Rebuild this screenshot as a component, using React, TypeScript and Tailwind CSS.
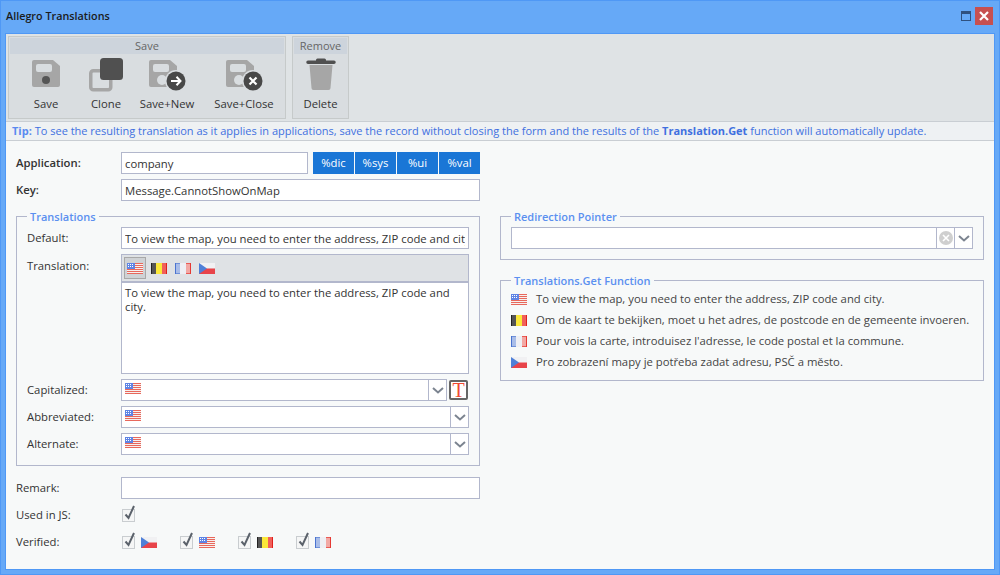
import React from 'react';

const font = { fontFamily: '"Open Sans", "Noto Sans", sans-serif' };

const FlagUS = () => (
    <svg width="16" height="11" viewBox="0 0 16 11" shapeRendering="crispEdges" className="shrink-0">
        <rect width="16" height="11" fill="#f6f0ee" />
        {[0, 2, 4, 6, 8, 10].map((y) => (
            <rect key={y} y={y} width="16" height="1" fill="#e8685c" />
        ))}
        <rect width="8" height="6" fill="#5f84e4" />
        {[1, 3, 5].map((x) => [1, 3].map((y) => <rect key={`${x}-${y}`} x={x} y={y} width="1" height="1" fill="#fff" />))}
    </svg>
);

const FlagBE = () => (
    <svg width="16" height="11" viewBox="0 0 16 11" shapeRendering="crispEdges" className="shrink-0">
        <rect width="5" height="11" fill="#555" />
        <rect width="1" height="11" fill="#222" />
        <rect x="5" width="6" height="11" fill="#fbe83a" />
        <rect x="11" width="5" height="11" fill="#f0605a" />
        <rect x="15" width="1" height="11" fill="#e0201c" />
    </svg>
);

const FlagFR = () => (
    <svg width="16" height="11" viewBox="0 0 16 11" shapeRendering="crispEdges" className="shrink-0">
        <rect width="5" height="11" fill="#a9bde8" />
        <rect x="5" width="6" height="11" fill="#eeeff4" />
        <rect x="11" width="5" height="11" fill="#f2a8a4" />
        <rect width="1" height="11" fill="#4a73d0" />
        <rect x="1" width="4" height="1" fill="#6f90d8" />
        <rect x="1" y="10" width="4" height="1" fill="#6f90d8" />
        <rect x="11" width="4" height="1" fill="#ea5a54" />
        <rect x="11" y="10" width="4" height="1" fill="#ea5a54" />
        <rect x="15" width="1" height="11" fill="#e53a34" />
    </svg>
);

const FlagCZ = () => (
    <svg width="16" height="11" viewBox="0 0 16 11" className="shrink-0">
        <rect width="16" height="5.5" fill="#f1f1f3" />
        <rect y="5.5" width="16" height="5.5" fill="#e8444a" />
        <polygon points="0,0 8,5.5 0,11" fill="#4f80d8" />
    </svg>
);

const flags = { us: FlagUS, be: FlagBE, fr: FlagFR, cz: FlagCZ };
const Flag = ({ name }: { name: keyof typeof flags }) => {
    const Icon = flags[name];
    return <Icon />;
};

const Chevron = () => (
    <svg width="12" height="7" viewBox="0 0 12 7" fill="none" stroke="#7c8490" strokeWidth="2">
        <path d="M1 1l5 4.5L11 1" />
    </svg>
);

const Check = () => (
    <span className="relative block w-[13px] h-[13px] border border-[#c9cdd0] bg-[#f5f6f6] shrink-0">
        <svg width="14" height="16" viewBox="0 0 14 16" fill="none" stroke="#5b626b" strokeWidth="2" className="absolute left-[0px] top-[-5px]">
            <path d="M2.5 9.5l3 3.5 5.5-12" />
        </svg>
    </span>
);

const Field = ({ value = '', className = '' }: { value?: string; className?: string }) => (
    <input
        readOnly
        value={value}
        className={`h-[22px] border border-[#b2b7cc] bg-white px-[3px] text-[11.3px] text-[#333] outline-none ${className}`}
    />
);

const Combo = ({ width }: { width: string }) => (
    <div className={`flex h-[22px] border border-[#b2b7cc] bg-white ${width}`}>
        <div className="flex-1 pl-[3px] pt-[3px]">
            <Flag name="us" />
        </div>
        <div className="flex w-[18px] items-center justify-center border-l border-[#b2b7cc]">
            <Chevron />
        </div>
    </div>
);

const Legend = ({ children }: { children: React.ReactNode }) => (
    <legend className="px-[3px] text-[11px] leading-[15px] font-semibold text-[#5b90f0]">{children}</legend>
);

const Floppy = ({ badge }: { badge?: 'arrow' | 'close' }) => (
    <svg width={badge ? 40 : 32} height="34" viewBox={badge ? '0 0 40 34' : '0 0 32 34'}>
        <path d="M4 2h19l7 6v19a2 2 0 0 1-2 2H4a2 2 0 0 1-2-2V4a2 2 0 0 1 2-2z" fill="#a6a6a6" />
        <rect x="6" y="6" width="16" height="8" rx="2" fill="#d9dde0" />
        {!badge && <circle cx="16" cy="22" r="4" fill="#555" />}
        {badge && (
            <>
                <circle cx="15" cy="22" r="5" fill="#d9dde0" />
                <circle cx="29" cy="23" r="11" fill="#d9dde0" />
                <circle cx="29" cy="23" r="9.5" fill="#484848" />
            </>
        )}
        {badge === 'arrow' && <path d="M24 23h9M29.5 18.8l4 4.2-4 4.2" fill="none" stroke="#fff" strokeWidth="2" />}
        {badge === 'close' && <path d="M25.5 19.5l7 7M32.5 19.5l-7 7" fill="none" stroke="#fff" strokeWidth="2.2" />}
    </svg>
);

const CloneIcon = () => (
    <svg width="34" height="34" viewBox="0 0 34 34">
        <rect x="1.75" y="12.75" width="20" height="19" rx="2.5" fill="none" stroke="#a6a6a6" strokeWidth="3.5" />
        <rect x="11" y="0" width="23" height="22" rx="3.5" fill="#505050" />
    </svg>
);

const TrashIcon = () => (
    <svg width="32" height="34" viewBox="0 0 32 34">
        <path d="M11 2a1.5 1.5 0 0 1 1.5-1.5h7A1.5 1.5 0 0 1 21 2v.5h8a1.5 1.5 0 0 1 0 3.5H3a1.5 1.5 0 0 1 0-3.5h8z" fill="#505050" />
        <path d="M4.5 7h23l-2 23a2 2 0 0 1-2 2H8.500a2 2 0 0 1-2-2z" fill="#a6a6a6" />
    </svg>
);

const ToolButton = ({ icon, label, className }: { icon: React.ReactNode; label: string; className: string }) => (
    <div className={`flex flex-col items-center ${className}`}>
        <div className="flex h-[35px] items-start justify-center">{icon}</div>
        <span className="mt-[3px] text-[11.3px] leading-[16px] whitespace-nowrap text-[#333]">{label}</span>
    </div>
);

const Toolbar = () => (
    <div className="flex h-[87px] gap-[6px] bg-[#dfe3e5] px-[2px] pt-[2px]">
        <div className="h-[83px] w-[278px] border border-[#c6caca] bg-[#d9dde0] p-px">
            <div className="h-[16px] bg-[#cdd4dc] text-center text-[11px] leading-[16px] text-[#666]">Save</div>
            <div className="flex pl-[6px] pt-[4px]">
                <ToolButton icon={<Floppy />} label="Save" className="w-[60px]" />
                <ToolButton icon={<CloneIcon />} label="Clone" className="w-[60px]" />
                <ToolButton icon={<Floppy badge="arrow" />} label="Save+New" className="w-[62px]" />
                <ToolButton icon={<Floppy badge="close" />} label="Save+Close" className="ml-[16px] w-[60px]" />
            </div>
        </div>
        <div className="h-[83px] w-[57px] border border-[#c6caca] bg-[#d9dde0] p-px">
            <div className="h-[16px] bg-[#cdd4dc] text-center text-[11px] leading-[16px] text-[#666]">Remove</div>
            <div className="flex justify-center pt-[4px]">
                <ToolButton icon={<TrashIcon />} label="Delete" className="w-[55px]" />
            </div>
        </div>
    </div>
);

const functionRows: { flag: keyof typeof flags; text: string }[] = [
    { flag: 'us', text: 'To view the map, you need to enter the address, ZIP code and city.' },
    { flag: 'be', text: 'Om de kaart te bekijken, moet u het adres, de postcode en de gemeente invoeren.' },
    { flag: 'fr', text: "Pour vois la carte, introduisez l'adresse, le code postal et la commune." },
    { flag: 'cz', text: 'Pro zobrazení mapy je potřeba zadat adresu, PSČ a město.' },
];

const LeftColumn = () => (
    <div className="w-[464px] shrink-0 text-[11.3px] text-[#333]">
        <div className="flex h-[22px] items-center">
            <span className="w-[105px] font-semibold">Application:</span>
            <Field value="company" className="w-[187px]" />
            <div className="ml-[5px] flex gap-px">
                {['%dic', '%sys', '%ui', '%val'].map((b) => (
                    <div key={b} className="flex h-[22px] w-[41px] items-center justify-center bg-[#1a76d6] text-white">{b}</div>
                ))}
            </div>
        </div>
        <div className="mt-[5px] flex h-[22px] items-center">
            <span className="w-[105px] font-semibold">Key:</span>
            <Field value="Message.CannotShowOnMap" className="w-[359px]" />
        </div>
        <fieldset className="mt-[8px] h-[257px] border border-[#b2b7cc] px-[10px]">
            <Legend>Translations</Legend>
            <div className="mt-[3px] flex h-[22px] items-center">
                <span className="w-[94px]">Default:</span>
                <Field value="To view the map, you need to enter the address, ZIP code and city." className="w-[348px]" />
            </div>
            <div className="mt-[5px] flex">
                <span className="w-[94px] pt-[4px]">Translation:</span>
                <div className="h-[120px] w-[348px] border border-[#b2b7cc] bg-white">
                    <div className="flex h-[28px] items-center border-b-2 border-[#b2b7cc] bg-[#dfe2e5] pl-[2px]">
                        <div className="flex h-[22px] w-[22px] items-center justify-center border border-[#a8a8a8] bg-[#cfd2d5]">
                            <Flag name="us" />
                        </div>
                        <div className="ml-[5px] flex gap-[8px]">
                            <Flag name="be" />
                            <Flag name="fr" />
                            <Flag name="cz" />
                        </div>
                    </div>
                    <textarea
                        readOnly
                        value="To view the map, you need to enter the address, ZIP code and city."
                        className="block h-[88px] w-full resize-none overflow-hidden px-[3px] pt-[3px] text-[11.3px] leading-[14px] outline-none"
                    />
                </div>
            </div>
            <div className="mt-[5px] flex h-[22px] items-center">
                <span className="w-[94px]">Capitalized:</span>
                <Combo width="w-[326px]" />
                <div className="ml-[2px] flex h-[20px] w-[19px] items-center justify-center rounded-[2px] border-2 border-[#666] bg-white font-['Liberation_Serif',serif] text-[20px] leading-none text-[#f04a30]">T</div>
            </div>
            <div className="mt-[5px] flex h-[22px] items-center">
                <span className="w-[94px]">Abbreviated:</span>
                <Combo width="w-[348px]" />
            </div>
            <div className="mt-[5px] flex h-[22px] items-center">
                <span className="w-[94px]">Alternate:</span>
                <Combo width="w-[348px]" />
            </div>
        </fieldset>
        <div className="mt-[11px] flex h-[22px] items-center">
            <span className="w-[105px]">Remark:</span>
            <Field className="w-[359px]" />
        </div>
        <div className="mt-[9px] flex h-[14px] items-center">
            <span className="w-[106px]">Used in JS:</span>
            <Check />
        </div>
        <div className="mt-[13px] flex h-[14px] items-center">
            <span className="w-[106px]">Verified:</span>
            <div className="flex">
                {(['cz', 'us', 'be', 'fr'] as const).map((f) => (
                    <div key={f} className="flex w-[58px] items-center gap-[6px]">
                        <Check />
                        <Flag name={f} />
                    </div>
                ))}
            </div>
        </div>
    </div>
);

const RightColumn = () => (
    <div className="w-[484px] shrink-0 pt-[57px] text-[11.3px] text-[#444]">
        <fieldset className="h-[51px] min-w-0 border border-[#b2b7cc] px-[10px]">
            <Legend>Redirection Pointer</Legend>
            <div className="mt-[3px] flex h-[22px] border border-[#b2b7cc] bg-white">
                <div className="flex-1" />
                <div className="flex w-[18px] items-center justify-center border-l border-[#b2b7cc]">
                    <svg width="14" height="14" viewBox="0 0 14 14">
                        <circle cx="7" cy="7" r="7" fill="#cfcfcf" />
                        <path d="M4 4l6 6M10 4l-6 6" stroke="#fff" strokeWidth="1.6" />
                    </svg>
                </div>
                <div className="flex w-[18px] items-center justify-center border-l border-[#b2b7cc]">
                    <Chevron />
                </div>
            </div>
        </fieldset>
        <fieldset className="mt-[13px] h-[108px] min-w-0 border border-[#b2b7cc] px-[10px]">
            <Legend>Translations.Get Function</Legend>
            <div className="mt-[2px] flex flex-col gap-[3px]">
                {functionRows.map((r) => (
                    <div key={r.flag} className="flex h-[18px] items-center gap-[9px] whitespace-nowrap">
                        <Flag name={r.flag} />
                        <span>{r.text}</span>
                    </div>
                ))}
            </div>
        </fieldset>
    </div>
);

export default function App() {
    return (
        <div style={font} className="flex h-[575px] w-[1000px] flex-col overflow-hidden border border-[#4f98f5] bg-[#66a9f7]">
            <div className="flex h-[32px] shrink-0 items-center justify-between pb-[2px] pl-[5px]">
                <span className="text-[10.8px] font-semibold text-[#1b1b1b]">Allegro Translations</span>
                <div className="flex items-center gap-[4px] pr-[6px]">
                    <div className="h-[10px] w-[10px] border border-[#2f5180] border-t-[3px]" />
                    <div className="flex h-[18px] w-[18px] items-center justify-center bg-[#c75050]">
                        <svg width="10" height="10" viewBox="0 0 10 10" stroke="#fff" strokeWidth="2.2">
                            <path d="M1 1l8 8M9 1l-8 8" />
                        </svg>
                    </div>
                </div>
            </div>
            <div className="mx-[4px] mb-[4px] flex flex-1 flex-col border border-[#4f98f5] bg-[#f7f9f9]">
                <Toolbar />
                <div className="h-[20px] border-y border-[#c9ced3] bg-[#eef1f3] pl-[6px] text-[11px] leading-[18px] whitespace-nowrap text-[#4070e0]">
                    <span className="font-bold text-[#5a8af0]">Tip:</span> To see the resulting translation as it applies in applications, save the record without closing the form and the results of the <span className="font-bold">Translation.Get</span> function will automatically update.
                </div>
                <div className="flex gap-[20px] pl-[10px] pt-[11px]">
                    <LeftColumn />
                    <RightColumn />
                </div>
            </div>
        </div>
    );
}
